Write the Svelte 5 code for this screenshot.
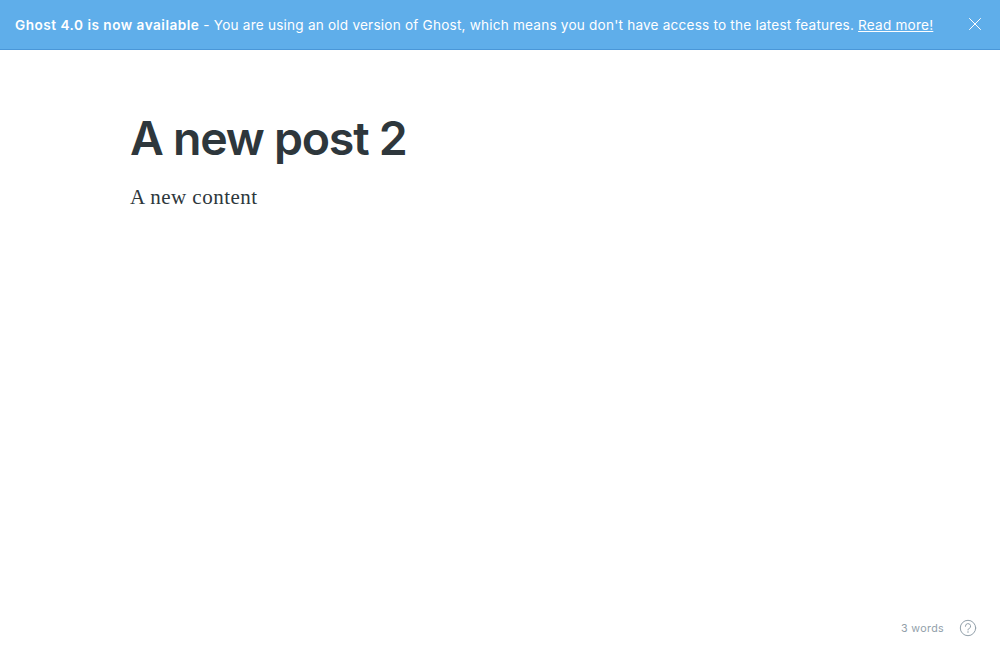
<script>
  const title = 'A new post 2';
  const content = 'A new content';
</script>

<div class="page">
  <aside class="banner">
    <div class="message"><b>Ghost 4.0 is now available</b> - You are using an old version of Ghost, which means you don't have access to the latest features. <a href="#more">Read more!</a></div>
    <button aria-label="Close">
      <svg width="12" height="12" viewBox="0 0 12 12"><path d="M.2.2l11.6 11.6M11.8.2L.2 11.8" /></svg>
    </button>
  </aside>
  <main>
    <h1>{title}</h1>
    <p>{content}</p>
  </main>
  <footer>
    <span class="count">3 words</span>
    <svg width="18" height="18" viewBox="0 0 18 18">
      <circle cx="9" cy="9" r="7.7" />
      <path d="M6.4 7.3a2.6 2.6 0 1 1 3.6 2.3c-.7.3-1 .6-1 1.2v.2" />
      <circle class="dot" cx="9" cy="13" r=".75" />
    </svg>
  </footer>
</div>

<style>
  :global(body) { margin: 0; background: #fff; }
  .page { height: 660px; display: flex; flex-direction: column; font-family: Inter, sans-serif; overflow: hidden; }
  .banner { box-sizing: border-box; height: 50px; flex: none; display: flex; align-items: center; justify-content: space-between; padding: 0 19px 0 15px; background: #5faeea; border-bottom: 1px solid #4a97d8; color: #fff; }
  .message { font-size: 13.6px; line-height: 20px; white-space: nowrap; letter-spacing: 0.205px; }
  b { font-weight: 600; letter-spacing: 0.5px; }
  a { color: inherit; text-decoration: underline; }
  button { border: 0; padding: 0; background: none; display: flex; margin-top: -1px; }
  svg { display: block; fill: none; }
  button svg { stroke: #fff; stroke-width: 1; }
  main { flex: 1; padding: 59px 130px 0; }
  h1 { margin: 0; color: #2e373c; font-size: 46.5px; line-height: 58px; font-weight: 600; letter-spacing: -1.25px; }
  p { margin: 14px 0 0; color: #2e373c; font-family: Georgia, "Liberation Serif", serif; font-size: 21px; line-height: 32px; letter-spacing: 0.48px; }
  footer { height: 64px; box-sizing: border-box; padding: 0 23px 0; display: flex; justify-content: flex-end; align-items: center; gap: 15px; }
  .count { color: #92a0aa; font-size: 10.7px; letter-spacing: 0.33px; }
  footer svg { stroke: #92a0aa; stroke-width: 1; stroke-linecap: round; }
  footer svg .dot { fill: #92a0aa; stroke: none; }
</style>
